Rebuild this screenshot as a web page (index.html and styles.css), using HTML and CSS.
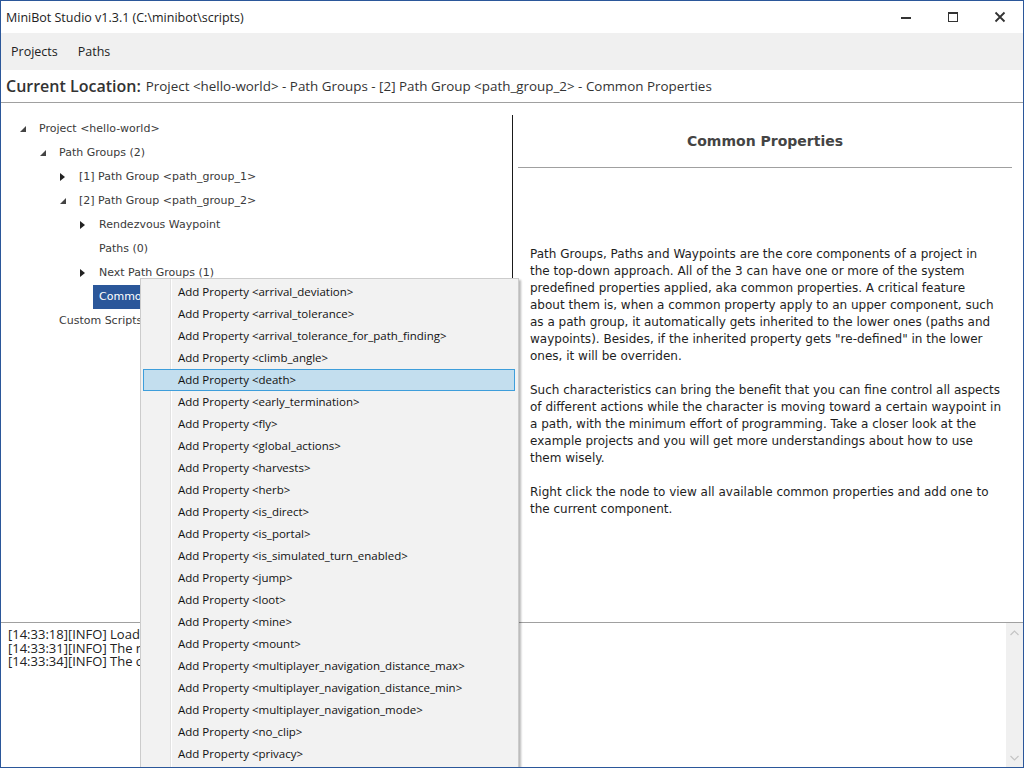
FILE: index.html
```html
<!DOCTYPE html>
<html>
<head>
<meta charset="utf-8">
<title>MiniBot Studio</title>
<link rel="stylesheet" href="styles.css">
</head>
<body>
<div class="window">
  <div class="titlebar">
    <span class="title">MiniBot Studio v1.3.1 (C:\minibot\scripts)</span>
    <div class="controls">
      <span class="ctl"><svg width="12" height="12" viewBox="0 0 12 12"><rect x="1" y="6" width="10" height="2" fill="#333"/></svg></span>
      <span class="ctl"><svg width="12" height="12" viewBox="0 0 12 12"><rect x="1.5" y="1.5" width="9" height="9" fill="none" stroke="#333" stroke-width="1"/><rect x="1" y="1" width="10" height="2" fill="#333"/></svg></span>
      <span class="ctl"><svg width="12" height="12" viewBox="0 0 12 12"><path d="M1.5 1.5 L10.5 10.5 M10.5 1.5 L1.5 10.5" stroke="#333" stroke-width="1.8"/></svg></span>
    </div>
  </div>
  <div class="menubar">
    <span class="menu-item">Projects</span>
    <span class="menu-item">Paths</span>
  </div>
  <div class="location">
    <span class="loc-label">Current Location:</span>
    <span class="loc-path">Project &lt;hello-world&gt; - Path Groups - [2] Path Group &lt;path_group_2&gt; - Common Properties</span>
  </div>
  <div class="main">
    <div class="tree">
      <div class="row lv0"><span class="arrow"><svg width="6" height="6" viewBox="0 0 6 6"><polygon points="6,0 6,6 0,6" fill="#444"/></svg></span><span class="label">Project &lt;hello-world&gt;</span></div>
      <div class="row lv1"><span class="arrow"><svg width="6" height="6" viewBox="0 0 6 6"><polygon points="6,0 6,6 0,6" fill="#444"/></svg></span><span class="label">Path Groups (2)</span></div>
      <div class="row lv2"><span class="arrow"><svg width="5" height="8" viewBox="0 0 5 8"><polygon points="0,0 5,4 0,8" fill="#222"/></svg></span><span class="label">[1] Path Group &lt;path_group_1&gt;</span></div>
      <div class="row lv2"><span class="arrow"><svg width="6" height="6" viewBox="0 0 6 6"><polygon points="6,0 6,6 0,6" fill="#444"/></svg></span><span class="label">[2] Path Group &lt;path_group_2&gt;</span></div>
      <div class="row lv3"><span class="arrow"><svg width="5" height="8" viewBox="0 0 5 8"><polygon points="0,0 5,4 0,8" fill="#222"/></svg></span><span class="label">Rendezvous Waypoint</span></div>
      <div class="row lv3"><span class="arrow"></span><span class="label">Paths (0)</span></div>
      <div class="row lv3"><span class="arrow"><svg width="5" height="8" viewBox="0 0 5 8"><polygon points="0,0 5,4 0,8" fill="#222"/></svg></span><span class="label">Next Path Groups (1)</span></div>
      <div class="row lv3"><span class="arrow"></span><span class="label selected">Common Properties</span></div>
      <div class="row lv1"><span class="arrow"></span><span class="label">Custom Scripts</span></div>
    </div>
    <div class="divider"></div>
    <div class="detail">
      <h2 class="detail-title">Common Properties</h2>
      <hr class="rule">
      <p class="para">Path Groups, Paths and Waypoints are the core components of a project in<br>the top-down approach. All of the 3 can have one or more of the system<br>predefined properties applied, aka common properties. A critical feature<br>about them is, when a common property apply to an upper component, such<br>as a path group, it automatically gets inherited to the lower ones (paths and<br>waypoints). Besides, if the inherited property gets "re-defined" in the lower<br>ones, it will be overriden.</p>
      <p class="para">Such characteristics can bring the benefit that you can fine control all aspects<br>of different actions while the character is moving toward a certain waypoint in<br>a path, with the minimum effort of programming. Take a closer look at the<br>example projects and you will get more understandings about how to use<br>them wisely.</p>
      <p class="para">Right click the node to view all available common properties and add one to<br>the current component.</p>
    </div>
  </div>
  <div class="log">
    <div class="log-text">
      <div>[14:33:18][INFO] Loaded project &lt;hello-world&gt;</div>
      <div>[14:33:31][INFO] The node has been selected</div>
      <div>[14:33:34][INFO] The common properties are displayed</div>
    </div>
    <div class="scrollbar">
      <svg width="9" height="6" viewBox="0 0 9 6"><path d="M0.5 5 L4.5 1 L8.5 5" fill="none" stroke="#c4c4c4" stroke-width="1.2"/></svg>
      <svg width="9" height="6" viewBox="0 0 9 6"><path d="M0.5 1 L4.5 5 L8.5 1" fill="none" stroke="#c4c4c4" stroke-width="1.2"/></svg>
    </div>
  </div>

  <div class="context-menu">
    <div class="cm-item">Add Property &lt;arrival_deviation&gt;</div>
    <div class="cm-item">Add Property &lt;arrival_tolerance&gt;</div>
    <div class="cm-item">Add Property &lt;arrival_tolerance_for_path_finding&gt;</div>
    <div class="cm-item">Add Property &lt;climb_angle&gt;</div>
    <div class="cm-item hover">Add Property &lt;death&gt;</div>
    <div class="cm-item">Add Property &lt;early_termination&gt;</div>
    <div class="cm-item">Add Property &lt;fly&gt;</div>
    <div class="cm-item">Add Property &lt;global_actions&gt;</div>
    <div class="cm-item">Add Property &lt;harvests&gt;</div>
    <div class="cm-item">Add Property &lt;herb&gt;</div>
    <div class="cm-item">Add Property &lt;is_direct&gt;</div>
    <div class="cm-item">Add Property &lt;is_portal&gt;</div>
    <div class="cm-item">Add Property &lt;is_simulated_turn_enabled&gt;</div>
    <div class="cm-item">Add Property &lt;jump&gt;</div>
    <div class="cm-item">Add Property &lt;loot&gt;</div>
    <div class="cm-item">Add Property &lt;mine&gt;</div>
    <div class="cm-item">Add Property &lt;mount&gt;</div>
    <div class="cm-item">Add Property &lt;multiplayer_navigation_distance_max&gt;</div>
    <div class="cm-item">Add Property &lt;multiplayer_navigation_distance_min&gt;</div>
    <div class="cm-item">Add Property &lt;multiplayer_navigation_mode&gt;</div>
    <div class="cm-item">Add Property &lt;no_clip&gt;</div>
    <div class="cm-item">Add Property &lt;privacy&gt;</div>
  </div>
</div>
</body>
</html>
```
FILE: styles.css
```css
* { box-sizing: border-box; }
html, body { margin: 0; padding: 0; }
body { width: 1024px; height: 768px; overflow: hidden; background: #fff; }

.window {
  position: relative;
  width: 1024px;
  height: 768px;
  border: 1px solid #2b579a;
  display: flex;
  flex-direction: column;
  overflow: hidden;
  font-family: "Open Sans", "Noto Sans", sans-serif;
  color: #1e1e1e;
}

.titlebar {
  height: 32px;
  flex: none;
  display: flex;
  align-items: center;
  justify-content: space-between;
  padding-left: 5px;
  background: #fff;
}
.title { font-size: 12.5px; color: #222; }
.controls { display: flex; height: 100%; }
.ctl {
  width: 47px;
  display: flex;
  align-items: center;
  justify-content: center;
}

.menubar {
  height: 37px;
  flex: none;
  background: #f0f0f0;
  display: flex;
  align-items: center;
  padding-top: 1px;
}
.menu-item { font-size: 12.5px; padding: 0 10px 2px 10px; color: #222; }

.location {
  height: 33px;
  flex: none;
  display: flex;
  align-items: center;
  padding-left: 5px;
  border-bottom: 1px solid #a0a0a0;
}
.loc-label { font-size: 16px; font-weight: 600; color: #333; margin-right: 5px; }
.loc-path { font-size: 13.4px; color: #333; }

.main {
  height: 519px;
  flex: none;
  display: flex;
}
.tree {
  width: 511px;
  padding-top: 14px;
  font-family: "DejaVu Sans", Verdana, sans-serif;
  font-size: 11px;
  color: #3a3a3a;
}
.row { height: 24px; display: flex; align-items: center; }
.lv0 { padding-left: 19px; }
.lv1 { padding-left: 39px; }
.lv2 { padding-left: 59px; }
.lv3 { padding-left: 79px; }
.arrow { width: 13px; display: flex; align-items: center; }
.arrow svg { display: block; }
.label { padding: 0 6px; height: 24px; line-height: 24px; white-space: nowrap; }
.label.selected { background: #2b579a; color: #fff; }

.divider { width: 1px; background: #1a1a1a; margin-top: 12px; }

.detail {
  flex: 1;
  font-family: "DejaVu Sans", Verdana, sans-serif;
  color: #1e1e1e;
}
.detail-title {
  margin: 0;
  padding: 29px 6px 0 0;
  height: 64px;
  text-align: center;
  font-size: 14px;
  font-weight: bold;
  color: #444;
  line-height: 18px;
}
.rule {
  margin: 0 11px 0 5px;
  border: 0;
  border-top: 1px solid #a0a0a0;
  height: 0;
}
.para {
  margin: 0 0 17px 17px;
  font-size: 12px;
  line-height: 17px;
  white-space: nowrap;
}
.para:first-of-type { margin-top: 78px; }

.log {
  flex: 1;
  display: flex;
  border-top: 1px solid #a0a0a0;
}
.log-text {
  flex: 1;
  padding: 5px 0 0 7px;
  font-size: 13px;
  line-height: 13.5px;
  color: #222;
  white-space: nowrap;
  overflow: hidden;
}
.scrollbar {
  width: 17px;
  background: #f0f0f0;
  display: flex;
  flex-direction: column;
  justify-content: space-between;
  align-items: center;
  padding: 7px 0 6px;
}

.context-menu {
  position: absolute;
  left: 139px;
  top: 277px;
  width: 379px;
  height: 491px;
  background: #f2f2f2;
  border: 1px solid #ccc;
  border-bottom: 0;
  box-shadow: 2px 2px 2px rgba(0,0,0,0.28);
  padding: 2px 2px;
  background-image: linear-gradient(to right, transparent 29px, #e2e2e2 29px, #e2e2e2 30px, #fff 30px, #fff 31px, transparent 31px);
  font-size: 11.5px;
  color: #111;
}
.cm-item {
  height: 22px;
  line-height: 20px;
  padding-left: 34px;
  margin-right: 1px;
  border: 1px solid transparent;
  white-space: nowrap;
}
.cm-item.hover {
  background: #c3deee;
  border-color: #3e9edb;
}
```
